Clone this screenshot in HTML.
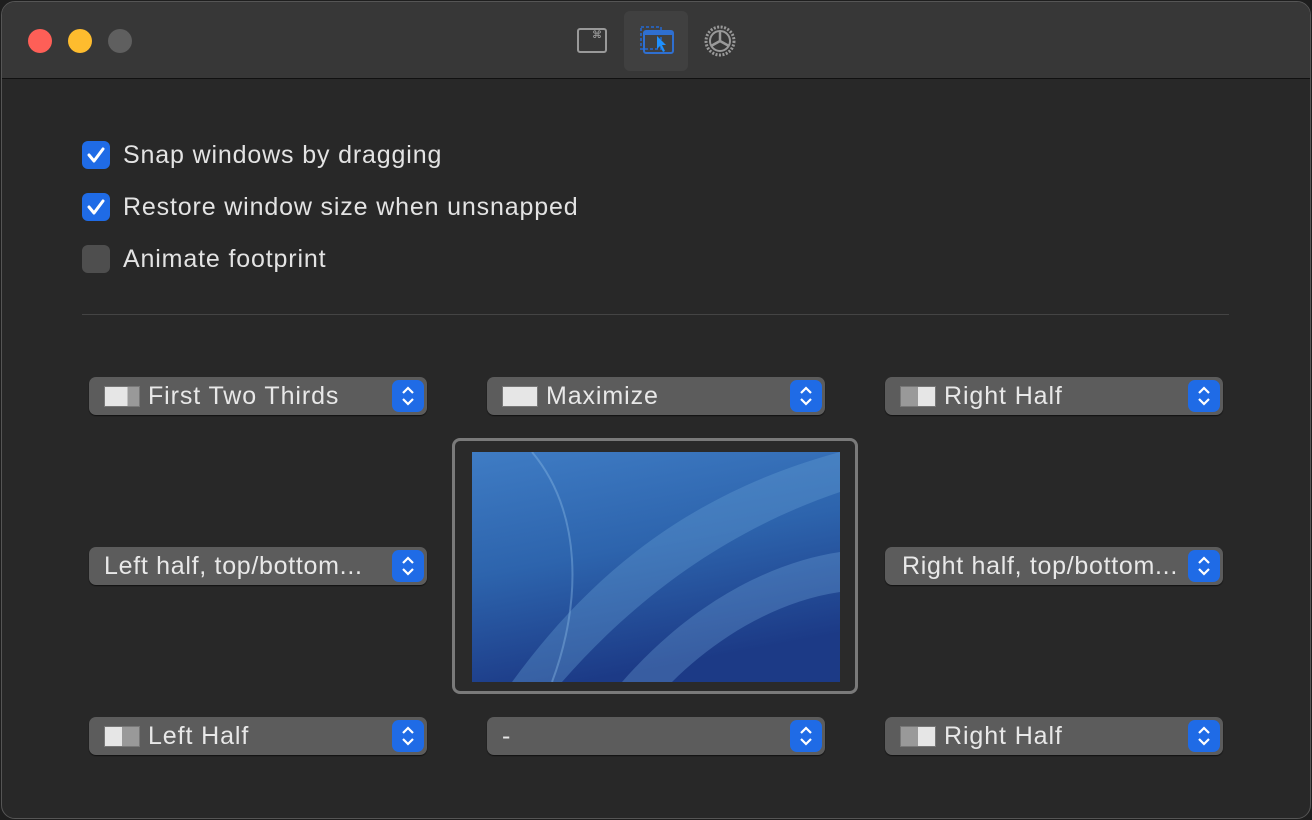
<!DOCTYPE html><html><head><style>
body{margin:0;width:1312px;height:820px;background:#1e1e1e;font-family:"Liberation Sans",sans-serif;overflow:hidden}
.win{position:absolute;left:1px;top:1px;width:1308px;height:816px;border:1px solid #555;border-radius:14px;background:#282828;overflow:hidden}
.tb{position:absolute;left:0;top:0;right:0;height:76px;background:#373737;border-bottom:1px solid #111}
.dot{position:absolute;top:27px;width:24px;height:24px;border-radius:50%}
.cb{position:absolute;left:80px;width:28px;height:28px;border-radius:6px;background:#1f6be6}
.cb.off{background:#4e4e4e}
.lbl{position:absolute;left:121px;color:#e3e3e3;font-size:25px;letter-spacing:0.85px}
.pop{position:absolute;width:338px;height:38px;background:#5c5c5c;border-radius:7px;box-shadow:0 1px 1px #111;color:#e8e8e8;font-size:25px;letter-spacing:0.9px;line-height:38px}
.pop .ic{position:absolute;left:15px;top:9px;width:36px;height:21px;background:#e6e6e6;border:1px solid #777;box-sizing:border-box}
.pop .t{position:absolute;left:59px;top:0}
.pop .t.n{left:15px}
.pop .st{position:absolute;right:3px;top:3px;width:32px;height:32px;background:#1f6be6;border-radius:7px}
</style></head><body><div class="win">
<div class="tb">
<div class="dot" style="left:26px;background:#fe5f57"></div>
<div class="dot" style="left:66px;background:#febc2e"></div>
<div class="dot" style="left:106px;background:#5f5f5f"></div>
<div style="position:absolute;left:575px;top:26px;width:30px;height:25px;border:2px solid #999;border-radius:3px;box-sizing:border-box;color:#aaa;font-size:10px;text-align:right;padding-right:3px;line-height:12px">⌘</div>
<div style="position:absolute;left:622px;top:9px;width:64px;height:60px;background:#404040;border-radius:6px"></div>
<svg style="position:absolute;left:637px;top:23px" width="38" height="32"><rect x="2" y="2" width="20" height="22" fill="none" stroke="#2a5fb0" stroke-width="2" stroke-dasharray="3 2"/><rect x="5" y="6" width="29" height="22" rx="2" fill="none" stroke="#2f6fd0" stroke-width="2"/><rect x="5" y="6" width="29" height="4" fill="#2f6fd0"/><path d="M18 11 L18 24 L21 21 L24 27 L26 26 L23 20 L27 20 Z" fill="#1e90ff"/></svg>
<svg style="position:absolute;left:701px;top:22px" width="34" height="34"><circle cx="17" cy="17" r="14" fill="none" stroke="#999" stroke-width="3" stroke-dasharray="2 1.5"/><circle cx="17" cy="17" r="10" fill="none" stroke="#999" stroke-width="2"/><path d="M17 17 V7 M17 17 L8 22 M17 17 L26 22" stroke="#999" stroke-width="2.5"/></svg>
</div>
<div class="cb" style="top:139px"><svg width="28" height="28"><path d="M7 14 L12 20 L21 8" fill="none" stroke="#fff" stroke-width="3" stroke-linecap="round" stroke-linejoin="round"/></svg></div>
<div class="lbl" style="top:139px">Snap windows by dragging</div>
<div class="cb" style="top:191px"><svg width="28" height="28"><path d="M7 14 L12 20 L21 8" fill="none" stroke="#fff" stroke-width="3" stroke-linecap="round" stroke-linejoin="round"/></svg></div>
<div class="lbl" style="top:191px">Restore window size when unsnapped</div>
<div class="cb off" style="top:243px"></div>
<div class="lbl" style="top:243px">Animate footprint</div>
<div style="position:absolute;left:80px;top:312px;width:1147px;height:1px;background:#444"></div>

<div class="pop" style="left:87px;top:375px"><div class="ic" style="background:linear-gradient(90deg,#e6e6e6 66%,#999 66%)"></div><span class="t">First Two Thirds</span><svg class="st" viewBox="0 0 32 32"><path d="M11 13 L16 8 L21 13 M11 19 L16 24 L21 19" fill="none" stroke="#fff" stroke-width="2.2"/></svg></div>
<div class="pop" style="left:485px;top:375px"><div class="ic"></div><span class="t">Maximize</span><svg class="st" viewBox="0 0 32 32"><path d="M11 13 L16 8 L21 13 M11 19 L16 24 L21 19" fill="none" stroke="#fff" stroke-width="2.2"/></svg></div>
<div class="pop" style="left:883px;top:375px"><div class="ic" style="background:linear-gradient(90deg,#999 50%,#e6e6e6 50%)"></div><span class="t">Right Half</span><svg class="st" viewBox="0 0 32 32"><path d="M11 13 L16 8 L21 13 M11 19 L16 24 L21 19" fill="none" stroke="#fff" stroke-width="2.2"/></svg></div>
<div class="pop" style="left:87px;top:545px"><span class="t n" style="letter-spacing:0.7px">Left half, top/bottom...</span><svg class="st" viewBox="0 0 32 32"><path d="M11 13 L16 8 L21 13 M11 19 L16 24 L21 19" fill="none" stroke="#fff" stroke-width="2.2"/></svg></div>
<div class="pop" style="left:883px;top:545px"><span class="t n" style="left:17px;letter-spacing:0.7px">Right half, top/bottom...</span><svg class="st" viewBox="0 0 32 32"><path d="M11 13 L16 8 L21 13 M11 19 L16 24 L21 19" fill="none" stroke="#fff" stroke-width="2.2"/></svg></div>
<div class="pop" style="left:87px;top:715px"><div class="ic" style="background:linear-gradient(90deg,#e6e6e6 50%,#999 50%)"></div><span class="t">Left Half</span><svg class="st" viewBox="0 0 32 32"><path d="M11 13 L16 8 L21 13 M11 19 L16 24 L21 19" fill="none" stroke="#fff" stroke-width="2.2"/></svg></div>
<div class="pop" style="left:485px;top:715px"><span class="t n">-</span><svg class="st" viewBox="0 0 32 32"><path d="M11 13 L16 8 L21 13 M11 19 L16 24 L21 19" fill="none" stroke="#fff" stroke-width="2.2"/></svg></div>
<div class="pop" style="left:883px;top:715px"><div class="ic" style="background:linear-gradient(90deg,#999 50%,#e6e6e6 50%)"></div><span class="t">Right Half</span><svg class="st" viewBox="0 0 32 32"><path d="M11 13 L16 8 L21 13 M11 19 L16 24 L21 19" fill="none" stroke="#fff" stroke-width="2.2"/></svg></div>

<div style="position:absolute;left:450px;top:436px;width:406px;height:256px;border:3px solid #7a7a7a;border-radius:8px;box-sizing:border-box;background:#2a2a2a"></div>
<svg style="position:absolute;left:470px;top:450px" width="368" height="230"><defs><linearGradient id="g" x1="0" y1="0" x2="0.3" y2="1"><stop offset="0" stop-color="#3f7cc4"/><stop offset="0.5" stop-color="#2d64ad"/><stop offset="1" stop-color="#1c3a86"/></linearGradient></defs><rect width="368" height="230" fill="url(#g)"/><path d="M40 230 C120 120 220 40 368 0 L368 40 C250 80 160 150 90 230Z" fill="#6aa4d8" opacity="0.35"/><path d="M150 230 C220 150 300 110 368 100 L368 140 C300 150 240 190 200 230Z" fill="#7ab0e0" opacity="0.3"/><path d="M60 0 C110 60 110 150 80 230" fill="none" stroke="#8bbbe6" stroke-width="2" opacity="0.4"/></svg>
</div></body></html>
